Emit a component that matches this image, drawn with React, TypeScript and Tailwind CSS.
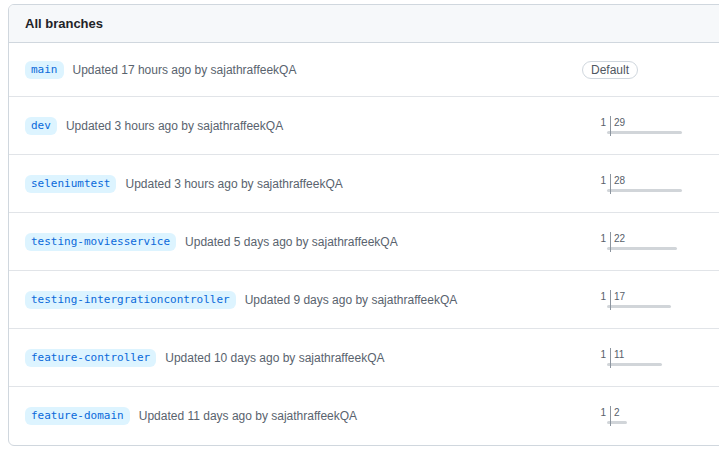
import React from "react";

type Branch = { name: string; updated: string; ahead?: number; width?: number; isDefault?: boolean };

const branches: Branch[] = [
  { name: "main", updated: "Updated 17 hours ago by sajathraffeekQA", isDefault: true },
  { name: "dev", updated: "Updated 3 hours ago by sajathraffeekQA", ahead: 29, width: 71 },
  { name: "seleniumtest", updated: "Updated 3 hours ago by sajathraffeekQA", ahead: 28, width: 71 },
  { name: "testing-moviesservice", updated: "Updated 5 days ago by sajathraffeekQA", ahead: 22, width: 66 },
  { name: "testing-intergrationcontroller", updated: "Updated 9 days ago by sajathraffeekQA", ahead: 17, width: 60 },
  { name: "feature-controller", updated: "Updated 10 days ago by sajathraffeekQA", ahead: 11, width: 51 },
  { name: "feature-domain", updated: "Updated 11 days ago by sajathraffeekQA", ahead: 2, width: 16 },
];

function AheadBehind({ ahead, width }: { ahead: number; width: number }) {
  return (
    <div className="flex items-start ml-[18px]">
      <div className="flex flex-col items-end w-[10px] pt-[1px]">
        <span className="text-[10px] leading-[12px] text-[#57606a] pr-[4px]">1</span>
        <div className="mt-[2px] h-[3px] w-[3px] rounded-l-full bg-[#d1d5d9]" />
      </div>
      <div className="w-px h-[20px] bg-[#8c959f]" />
      <div className="flex flex-col items-start pt-[1px]">
        <span className="text-[10px] leading-[12px] text-[#57606a] pl-[3px]">{ahead}</span>
        <div className="mt-[2px] h-[3px] rounded-r-full bg-[#d1d5d9]" style={{ width }} />
      </div>
    </div>
  );
}

export default function App() {
  return (
    <div className="w-[719px] h-[460px] overflow-hidden bg-white" style={{ fontFamily: '"Liberation Sans", Arial, sans-serif' }}>
      <div className="ml-[8px] mt-[4px] w-[740px] border border-[#d0d7de] rounded-[6px] overflow-hidden">
        <div className="h-[38px] bg-[#f6f8fa] border-b border-[#d0d7de] flex items-center pl-[16px]">
          <span className="text-[13px] font-bold text-[#1f2328]">All branches</span>
        </div>
        {branches.map((b, i) => (
          <div
            key={b.name}
            className={`flex items-center pl-[16px] ${b.isDefault ? "h-[54px]" : "h-[58px]"} ${i < branches.length - 1 ? "border-b border-[#e1e4e8]" : ""}`}
          >
            <div className="flex-1 flex items-center">
              <span
                className="rounded-[6px] bg-[#ddf4ff] text-[#0969da] px-[6px] h-[18px] leading-[18px] text-[11px]"
                style={{ fontFamily: '"DejaVu Sans Mono", "Liberation Mono", monospace' }}
              >
                {b.name}
              </span>
              <span className="ml-[9px] text-[12px] text-[#59636e]">{b.updated}</span>
            </div>
            <div className="w-[165px] flex items-center">
              {b.isDefault ? (
                <span className="border border-[#d0d7de] rounded-full px-[8px] h-[18px] leading-[16px] text-[12px] text-[#4f5761]">
                  Default
                </span>
              ) : (
                <AheadBehind ahead={b.ahead!} width={b.width!} />
              )}
            </div>
          </div>
        ))}
      </div>
    </div>
  );
}
